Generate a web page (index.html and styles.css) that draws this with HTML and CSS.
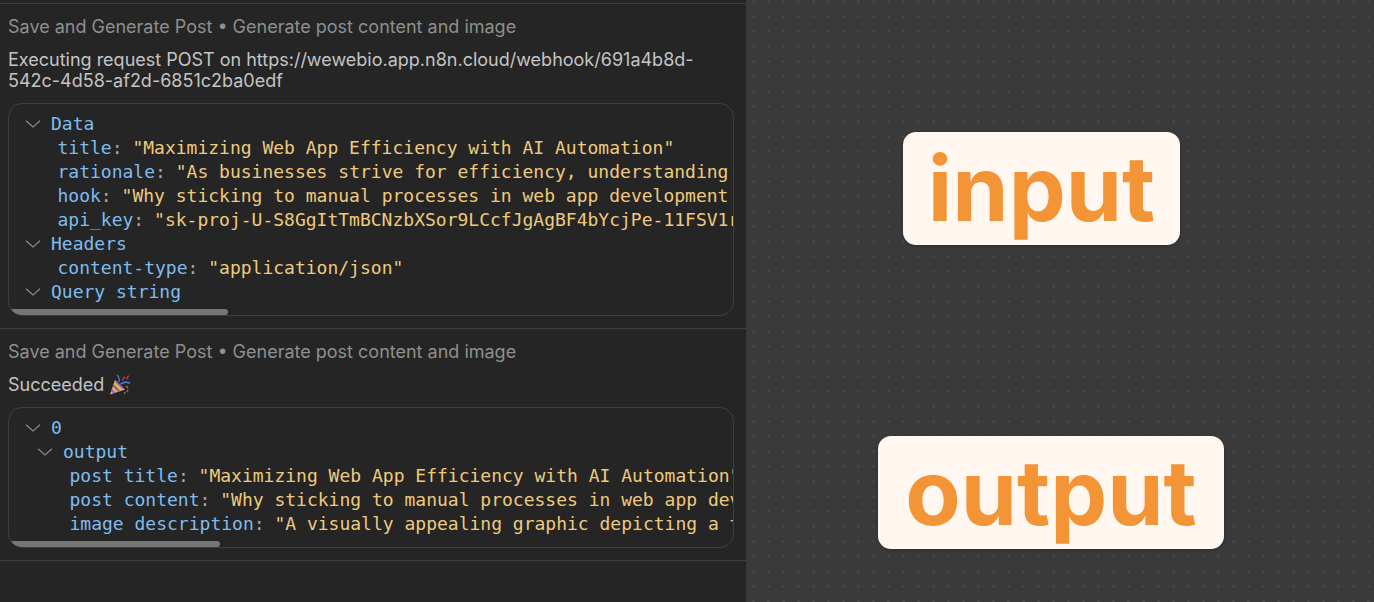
FILE: index.html
```html
<!DOCTYPE html>
<html lang="en">
<head>
<meta charset="utf-8">
<title>Workflow log</title>
<link rel="stylesheet" href="styles.css">
</head>
<body>
<div class="app">
  <section class="log">
    <article class="entry">
      <div class="entry-title">Save and Generate Post • Generate post content and image</div>
      <p class="entry-msg">Executing request POST on https://wewebio.app.n8n.cloud/webhook/691a4b8d-<br>542c-4d58-af2d-6851c2ba0edf</p>
      <div class="tree">
        <div class="row"><svg class="chev" viewBox="0 0 16 8"><path d="M1 .8 8 7 15 .8"/></svg><span class="key">Data</span></div>
        <div class="row leaf"><span class="key">title</span><span class="colon">: </span><span class="val">"Maximizing Web App Efficiency with AI Automation"</span></div>
        <div class="row leaf"><span class="key">rationale</span><span class="colon">: </span><span class="val">"As businesses strive for efficiency, understanding the role of AI automation"</span></div>
        <div class="row leaf"><span class="key">hook</span><span class="colon">: </span><span class="val">"Why sticking to manual processes in web app development is holding you back"</span></div>
        <div class="row leaf"><span class="key">api_key</span><span class="colon">: </span><span class="val">"sk-proj-U-S8GgItTmBCNzbXSor9LCcfJgAgBF4bYcjPe-11FSV1rKqQ2mWx"</span></div>
        <div class="row"><svg class="chev" viewBox="0 0 16 8"><path d="M1 .8 8 7 15 .8"/></svg><span class="key">Headers</span></div>
        <div class="row leaf"><span class="key">content-type</span><span class="colon">: </span><span class="val">"application/json"</span></div>
        <div class="row"><svg class="chev" viewBox="0 0 16 8"><path d="M1 .8 8 7 15 .8"/></svg><span class="key">Query string</span></div>
        <div class="thumb thumb-a"></div>
      </div>
    </article>
    <article class="entry">
      <div class="entry-title">Save and Generate Post • Generate post content and image</div>
      <p class="entry-msg entry-msg-ok">Succeeded
        <svg class="party" viewBox="0 0 22 22" role="img" aria-label="party popper">
          <path d="M6 6 1 20.5 16 15.5Z" fill="#e8b83a"/>
          <path d="M4.6 10 11.5 17 9 17.9 3.7 12.6Z" fill="#8d5bc4"/>
          <path d="M3 15 6.6 18.8 4.4 19.6 2.2 17.4Z" fill="#8d5bc4"/>
          <path d="M7.4 6.8 15 14.2 13.4 14.9 6.6 8.6Z" fill="#8d5bc4"/>
          <path d="M10 8 C11 5 10 3 8 1" stroke="#3f6fc8" stroke-width="1.5" fill="none"/>
          <path d="M11.5 10 16 8 21 9" stroke="#3f86d8" stroke-width="1.6" fill="none"/>
          <path d="M13 6 C15 6 14 3 16 3 M17 5 C19 5 18 2 20 2" stroke="#b3405e" stroke-width="1.4" fill="none"/>
          <path d="M17 12 19 14 M19 16 18 18 M16 18 15.5 20" stroke="#a8743a" stroke-width="1.4" fill="none"/>
        </svg>
      </p>
      <div class="tree">
        <div class="row"><svg class="chev" viewBox="0 0 16 8"><path d="M1 .8 8 7 15 .8"/></svg><span class="key">0</span></div>
        <div class="row level-1"><svg class="chev" viewBox="0 0 16 8"><path d="M1 .8 8 7 15 .8"/></svg><span class="key">output</span></div>
        <div class="row leaf level-1"><span class="key">post title</span><span class="colon">: </span><span class="val">"Maximizing Web App Efficiency with AI Automation"</span></div>
        <div class="row leaf level-1"><span class="key">post content</span><span class="colon">: </span><span class="val">"Why sticking to manual processes in web app development is holding you back"</span></div>
        <div class="row leaf level-1"><span class="key">image description</span><span class="colon">: </span><span class="val">"A visually appealing graphic depicting a team working with AI automation"</span></div>
        <div class="thumb thumb-b"></div>
      </div>
    </article>
  </section>
  <section class="canvas">
    <div class="node node-input">input</div>
    <div class="node node-output">output</div>
  </section>
</div>
</body>
</html>
```
FILE: styles.css
```css
* { box-sizing: border-box; }
html, body { margin: 0; height: 100%; overflow: hidden; }
body { background: #252525; font-family: Inter, "Liberation Sans", sans-serif; }
.app { display: flex; height: 602px; }
.log { width: 746px; flex: none; padding-top: 3px; background: #252525; }
.entry { border-top: 1px solid #3c3c3c; padding: 12px 12px 12px 8px; }
.entry:last-child { border-bottom: 1px solid #3c3c3c; }
.entry-title { font-size: 18px; line-height: 22px; color: #8f8f8f; margin-bottom: 12px; }
.entry-msg { margin: 0 0 12px; font-size: 18px; line-height: 20.5px; color: #c4c4c4; }
.entry-msg-ok { display: flex; align-items: center; gap: 5px; line-height: 22px; margin: -1px 0 11px; }
.party { width: 22px; height: 22px; }
.tree { position: relative; border: 1px solid #3e3e3e; border-radius: 14px; padding: 8px 0 11px; overflow: hidden; font-family: "DejaVu Sans Mono", "Liberation Mono", monospace; font-size: 18px; line-height: 24px; }
.row { display: flex; align-items: center; height: 24px; padding-left: 16px; white-space: pre; }
.row.level-1 { padding-left: 28px; }
.row.leaf { padding-left: 48.5px; }
.row.leaf.level-1 { padding-left: 60.5px; }
.chev { width: 16px; height: 8px; margin-right: 10px; flex: none; }
.chev path { fill: none; stroke: #8a8a8a; stroke-width: 1.2; }
.key { color: #7dbcf0; }
.colon { color: #a8a8a8; margin-right: -1px; }
.val { color: #efca7c; }
.thumb { position: absolute; left: 0; bottom: 0; height: 6px; border-radius: 3px; background: #767676; }
.thumb-a { width: 219px; }
.thumb-b { width: 211px; }
.canvas { position: relative; flex: 1; background-color: #3a3a3a; background-image: radial-gradient(circle, #474747 1px, transparent 1.3px); background-size: 15px 15px; background-position: 0 -6px; }
.node { position: absolute; display: flex; align-items: center; justify-content: center; height: 113px; padding-bottom: 0; border-radius: 13px; background: #fff7f0; color: #f39437; font-weight: 650; font-size: 90.5px; line-height: 1; box-shadow: 0 1px 3px rgba(0,0,0,.25); }
.node-input { left: 157px; top: 132px; width: 277px; }
.node-output { left: 132px; top: 436px; width: 346px; }
```
